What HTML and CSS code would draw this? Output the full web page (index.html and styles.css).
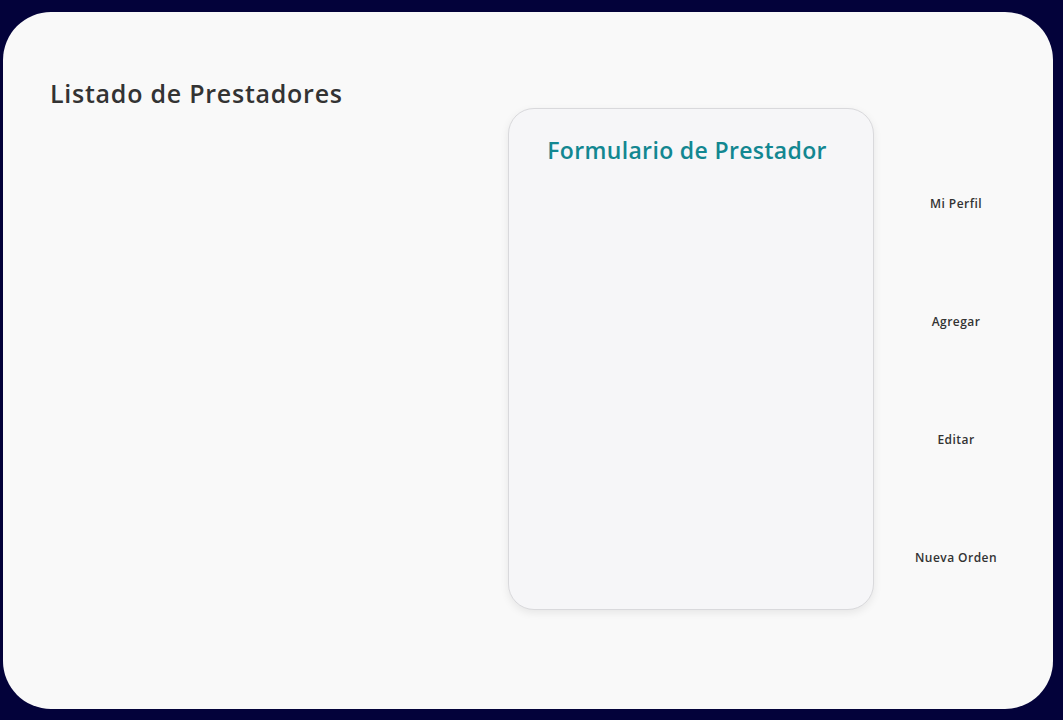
FILE: index.html
```html
<!DOCTYPE html>
<html lang="es">
<head>
<meta charset="utf-8">
<title>Listado de Prestadores</title>
<link rel="stylesheet" href="styles.css">
</head>
<body>
<main class="shell">
  <section class="list-col">
    <h1 class="page-title">Listado de Prestadores</h1>
  </section>
  <section class="form-card">
    <h2 class="form-title">Formulario de Prestador</h2>
  </section>
  <nav class="actions">
    <button class="action action-profile">Mi Perfil</button>
    <button class="action action-add">Agregar</button>
    <button class="action action-edit">Editar</button>
    <button class="action action-order">Nueva Orden</button>
  </nav>
</main>
</body>
</html>
```

FILE: styles.css
```css
html, body {
  margin: 0;
  padding: 0;
  height: 100%;
}

body {
  background: #03023a;
  padding: 12px 10px 11px 3px;
  box-sizing: border-box;
  font-family: "Open Sans", "Noto Sans", sans-serif;
}

.shell {
  box-sizing: border-box;
  width: 1050px;
  height: 697px;
  background: #f9f9f9;
  border-radius: 48px;
  display: flex;
  align-items: flex-start;
  padding: 0 0 0 47px;
}

.list-col {
  width: 458px;
  flex: none;
  padding-top: 66px;
}

.page-title {
  margin: 0;
  font-size: 25px;
  font-weight: 600;
  color: #333333;
  line-height: 30px;
  letter-spacing: 0.75px;
}

.form-card {
  box-sizing: border-box;
  flex: none;
  width: 366px;
  height: 502px;
  margin-top: 96px;
  background: #f6f6f8;
  border: 1px solid #d9d9dc;
  border-radius: 26px;
  box-shadow: 0 3px 8px rgba(0, 0, 0, 0.08);
  padding: 26px 8px 0 0;
}

.form-title {
  margin: 0;
  text-align: center;
  font-size: 23px;
  font-weight: 600;
  color: #128791;
  line-height: 30px;
  letter-spacing: 0.35px;
}

.actions {
  flex: none;
  width: 164px;
  display: flex;
  flex-direction: column;
  align-items: center;
  padding-top: 183px;
  gap: 100px;
}

.action {
  background: transparent;
  border: none;
  padding: 0;
  font-family: inherit;
  font-size: 12px;
  font-weight: 600;
  color: #333333;
  line-height: 18px;
  letter-spacing: 0.45px;
}
```
